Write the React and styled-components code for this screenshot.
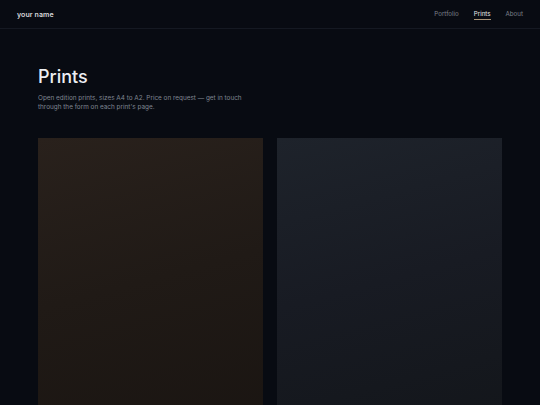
import React from 'react';
import styled, { createGlobalStyle } from 'styled-components';

const GlobalStyle = createGlobalStyle`
  html, body {
    margin: 0;
    padding: 0;
    background: #080b12;
  }
  body {
    font-family: Inter, "DejaVu Sans", sans-serif;
    color: #e6e6e6;
    -webkit-font-smoothing: antialiased;
  }
`;

const prints = [
  { id: 1, from: '#29211c', mid: '#201a16', to: '#191411' },
  { id: 2, from: '#1e232b', mid: '#181b23', to: '#121519' },
];

// Barra superior
const TopBar = styled.header`
  display: flex;
  align-items: center;
  justify-content: space-between;
  height: 28px;
  padding: 0 17px;
  border-bottom: 1px solid #151922;
`;

const Brand = styled.div`
  font-size: 7px;
  font-weight: 600;
  color: #d8d9dc;
  letter-spacing: 0.1px;
`;

const Nav = styled.nav`
  display: flex;
  gap: 15px;
  margin-top: -1px;
`;

const NavLink = styled.a`
  position: relative;
  font-size: 6.2px;
  color: ${(p) => (p.$active ? '#e8e8ea' : '#7d828c')};
  text-decoration: none;

  &::after {
    content: '';
    display: ${(p) => (p.$active ? 'block' : 'none')};
    position: absolute;
    left: 0;
    right: 0;
    bottom: -3px;
    height: 1px;
    background: #a89478;
  }
`;

// Cabecera de la sección
const Main = styled.main`
  padding: 37px 38px 0;
`;

const Title = styled.h1`
  margin: 0;
  font-size: 18px;
  font-weight: 500;
  line-height: 22px;
  color: #eceef2;
`;

const Lead = styled.p`
  margin: 6px 0 0;
  max-width: 220px;
  font-size: 6.4px;
  line-height: 9px;
  color: #7f8591;
`;

// Rejilla de láminas
const Grid = styled.div`
  display: grid;
  grid-template-columns: 1fr 1fr;
  gap: 14px;
  margin-top: 26px;
`;

const Card = styled.div`
  height: 320px;
  background: linear-gradient(
    165deg,
    ${(p) => p.$from} 0%,
    ${(p) => p.$mid} 45%,
    ${(p) => p.$to} 100%
  );
`;

export default function App() {
  return (
    <>
      <GlobalStyle />
      <TopBar>
        <Brand>your name</Brand>
        <Nav>
          <NavLink href="#">Portfolio</NavLink>
          <NavLink href="#" $active>Prints</NavLink>
          <NavLink href="#">About</NavLink>
        </Nav>
      </TopBar>
      <Main>
        <Title>Prints</Title>
        <Lead>
          Open edition prints, sizes A4 to A2. Price on request — get in touch
          through the form on each print's page.
        </Lead>
        <Grid>
          {prints.map((p) => (
            <Card key={p.id} $from={p.from} $mid={p.mid} $to={p.to} />
          ))}
        </Grid>
      </Main>
    </>
  );
}
